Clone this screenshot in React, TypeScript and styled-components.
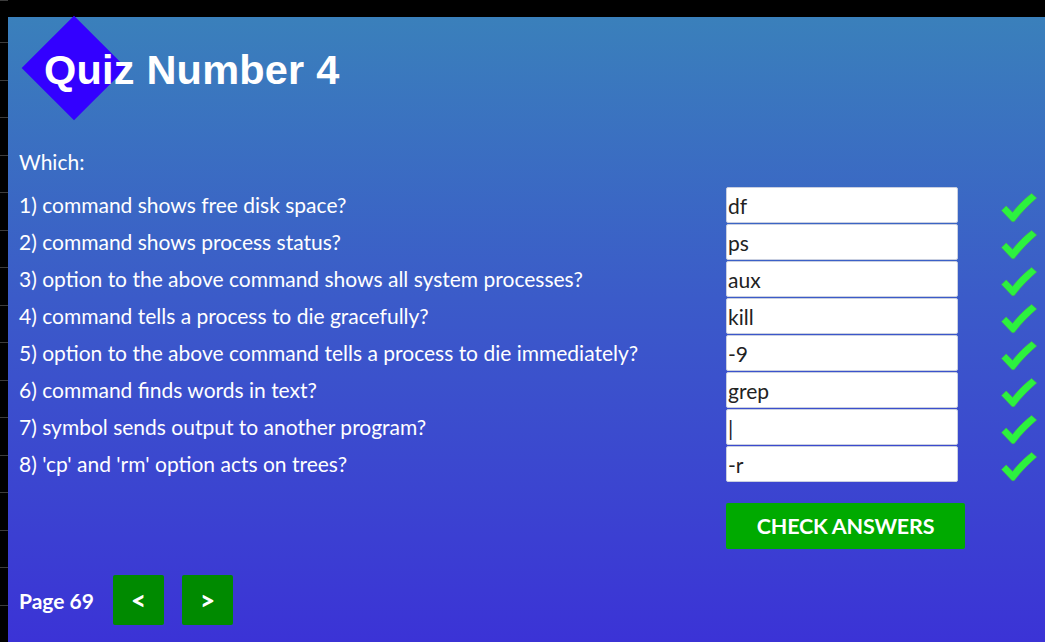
import React from "react";
import styled, { createGlobalStyle } from "styled-components";

const GlobalStyle = createGlobalStyle`
  html, body {
    margin: 0;
    padding: 0;
    height: 100%;
  }
  body {
    background-color: #000;
    background-image: repeating-linear-gradient(
      180deg,
      transparent 0,
      transparent 36.5px,
      #3c3c3c 36.5px,
      #3c3c3c 37.5px
    );
    background-position: 0 6px;
    background-size: 8px 100%;
    background-repeat: repeat-y;
    font-family: Lato, "Liberation Sans", sans-serif;
    overflow: hidden;
  }
`;

const Panel = styled.main`
  margin: 17px 0 0 8px;
  height: 625px;
  box-sizing: border-box;
  padding: 0 0 0 11px;
  background: linear-gradient(180deg, #3a80bb 0%, #3b5bc9 45%, #3b33d6 100%);
  color: #fff;
  display: flex;
  flex-direction: column;
`;

const Header = styled.header`
  position: relative;
  height: 103px;
  display: flex;
  align-items: center;
  padding: 3px 0 0 25px;
  box-sizing: border-box;

  &::before {
    content: "";
    position: absolute;
    left: 18px;
    top: 14px;
    width: 74px;
    height: 74px;
    background: #3300ff;
    transform: rotate(45deg);
  }
`;

const Title = styled.h1`
  position: relative;
  margin: 0;
  font-family: "Liberation Sans", Arial, sans-serif;
  font-weight: 700;
  font-size: 41.5px;
  letter-spacing: 0.2px;
  color: #fff;
`;

const Intro = styled.div`
  font-size: 21px;
  height: 30px;
  line-height: 30px;
  margin: 27px 0 10px;
`;

const QuizGrid = styled.div`
  display: grid;
  grid-template-columns: 707px 232px 1fr;
  grid-template-rows: repeat(8, 37px) auto;
  align-items: center;
`;

const Question = styled.div`
  font-size: 21px;
  white-space: nowrap;
  margin-top: -2px;
`;

const Answer = styled.input`
  box-sizing: border-box;
  width: 232px;
  height: 36px;
  margin-bottom: 1px;
  align-self: start;
  border: 1px solid #c9cfe0;
  border-radius: 2px;
  background: #fff;
  padding: 0 1px;
  font-family: Lato, "Liberation Sans", sans-serif;
  font-size: 21px;
  color: #222;
  outline: none;
`;

const Tick = styled.svg`
  margin-left: 43px;
  margin-top: 5px;
  width: 36px;
  height: 30px;
`;

const CheckButton = styled.button`
  grid-column: 2;
  margin-top: 20px;
  width: 239px;
  height: 46px;
  border: none;
  border-radius: 2px;
  background: #00aa00;
  color: #fff;
  font-family: Lato, "Liberation Sans", sans-serif;
  font-weight: 700;
  font-size: 21.5px;
  letter-spacing: -0.2px;
  text-transform: uppercase;
  cursor: pointer;
`;

const Footer = styled.footer`
  display: flex;
  align-items: center;
  margin-top: 26px;
`;

const PageLabel = styled.span`
  font-weight: 700;
  font-size: 21px;
  margin-right: 19px;
`;

const NavButton = styled.button`
  width: 51px;
  height: 50px;
  margin-right: 18px;
  border: none;
  border-radius: 2px;
  background: #008a00;
  color: #fff;
  font-family: Lato, "Liberation Sans", sans-serif;
  font-weight: 900;
  font-size: 26px;
  line-height: 1;
  cursor: pointer;
`;

const questions = [
  { q: "1) command shows free disk space?", a: "df" },
  { q: "2) command shows process status?", a: "ps" },
  { q: "3) option to the above command shows all system processes?", a: "aux" },
  { q: "4) command tells a process to die gracefully?", a: "kill" },
  { q: "5) option to the above command tells a process to die immediately?", a: "-9" },
  { q: "6) command finds words in text?", a: "grep" },
  { q: "7) symbol sends output to another program?", a: "|" },
  { q: "8) 'cp' and 'rm' option acts on trees?", a: "-r" },
];

const CheckMark = () => (
  <Tick viewBox="0 0 36 30">
    <path
      d="M0.6 17.6 L5.2 13 L11.6 19.4 C17.5 12 24 5.5 30.6 0.6 L35.6 5 C28 11.5 20 19.5 13.2 28.6 L11 28.6 Z"
      fill="#2cf23f"
      stroke="#45c23a"
      strokeWidth="0.6"
      strokeLinejoin="round"
    />
  </Tick>
);

export default function App() {
  return (
    <>
      <GlobalStyle />
      <Panel>
        <Header>
          <Title>Quiz Number 4</Title>
        </Header>
        <Intro>Which:</Intro>
        <QuizGrid>
          {questions.map((item) => (
            <React.Fragment key={item.q}>
              <Question>{item.q}</Question>
              <Answer defaultValue={item.a} />
              <CheckMark />
            </React.Fragment>
          ))}
          <CheckButton>Check Answers</CheckButton>
        </QuizGrid>
        <Footer>
          <PageLabel>Page 69</PageLabel>
          <NavButton>&lt;</NavButton>
          <NavButton>&gt;</NavButton>
        </Footer>
      </Panel>
    </>
  );
}
